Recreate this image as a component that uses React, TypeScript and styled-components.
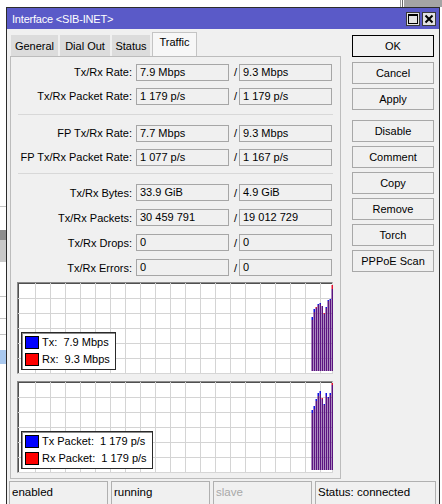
import React from 'react';
import styled, { createGlobalStyle } from 'styled-components';

const GlobalStyle = createGlobalStyle`
  html, body { margin: 0; padding: 0; }
  body {
    background: #fff;
    font-family: "Liberation Sans", Arial, sans-serif;
    font-size: 11px;
    color: #000;
  }
`;

// desktop and the windows lying behind the dialog
const Desktop = styled.div`
  position: relative;
  width: 442px;
  height: 504px;
  overflow: hidden;
  background: #fff;
`;

const Scrap = styled.div<{ $x: number; $y: number; $w: number; $h: number; $c: string }>`
  position: absolute;
  left: ${(p) => p.$x}px;
  top: ${(p) => p.$y}px;
  width: ${(p) => p.$w}px;
  height: ${(p) => p.$h}px;
  background: ${(p) => p.$c};
`;

const Dialog = styled.div`
  position: absolute;
  left: 6px;
  top: 7px;
  width: 434px;
  height: 497px;
  box-sizing: border-box;
  border: 1px solid #2c2c2c;
  border-bottom: none;
  background: #f0f0f0;
  display: flex;
  flex-direction: column;
`;

const TitleBar = styled.div`
  height: 21px;
  flex: none;
  background: #5a5ac8;
  color: #fff;
  display: flex;
  align-items: center;
  justify-content: space-between;
  padding: 0 3px 0 5px;
`;

const TitleText = styled.span`
  font-size: 11px;
  letter-spacing: -0.2px;
`;

const TitleButtons = styled.div`
  display: flex;
  gap: 2px;
`;

const TitleButton = styled.div`
  width: 14px;
  height: 14px;
  box-sizing: border-box;
  border: 1px solid #3a3a3a;
  background: #e2e2e2;
  display: flex;
  align-items: center;
  justify-content: center;
`;

const Main = styled.div`
  display: flex;
  padding: 3px 0 0 3px;
`;

const LeftCol = styled.div`
  width: 331px;
  display: flex;
  flex-direction: column;
`;

// tabs
const Tabs = styled.div`
  height: 24px;
  display: flex;
  align-items: flex-end;
  padding-left: 1px;
`;

const Tab = styled.div<{ $w: number; $active?: boolean }>`
  width: ${(p) => p.$w}px;
  height: ${(p) => (p.$active ? 24 : 21)}px;
  box-sizing: border-box;
  padding-top: ${(p) => (p.$active ? 3 : 4)}px;
  margin-right: 2px;
  text-align: center;
  white-space: nowrap;
  background: ${(p) => (p.$active ? '#f7f7f7' : '#dcdcdc')};
  border: 1px solid ${(p) => (p.$active ? '#c4c4c4' : '#dcdcdc')};
  border-bottom: none;
  font-size: 11px;
`;

const Panel = styled.div`
  height: 423px;
  box-sizing: border-box;
  border: 1px solid #bcbcbc;
  padding-top: 3px;
  display: flex;
  flex-direction: column;
`;

const Row = styled.div<{ $h?: number }>`
  display: flex;
  align-items: center;
  height: ${(p) => p.$h ?? 24}px;
`;

const Label = styled.div`
  width: 121px;
  margin-right: 4px;
  text-align: right;
  white-space: nowrap;
  font-size: 11px;
`;

const Field = styled.div`
  width: 93px;
  height: 17px;
  box-sizing: border-box;
  border: 1px solid #a6a6a6;
  background: #f0f0f0;
  padding-left: 3px;
  line-height: 15px;
  white-space: nowrap;
  font-size: 11px;
`;

const Slash = styled.div`
  width: 10px;
  box-sizing: border-box;
  padding-right: 2px;
  text-align: right;
  font-size: 11px;
`;

const Separator = styled.div<{ $mt: number; $mb: number }>`
  height: 1px;
  background: #d8d8d8;
  margin: ${(p) => p.$mt}px 7px ${(p) => p.$mb}px 7px;
`;

// graphs
const Graph = styled.div<{ $mt: number }>`
  position: relative;
  height: 92px;
  box-sizing: border-box;
  margin: ${(p) => p.$mt}px 7px 0 6px;
  border: 1px solid;
  border-color: #8a8a8a #d6d6d6 #d6d6d6 #8a8a8a;
  box-shadow: inset 1px 1px 0 #505050;
  background: #fff;
  svg {
    display: block;
  }
`;

const Legend = styled.div`
  position: absolute;
  left: 3px;
  bottom: 3px;
  height: 38px;
  box-sizing: border-box;
  border: 1px solid #2a2a2a;
  box-shadow: inset 1px 1px 0 #8a8a8a;
  background: #fff;
  padding: 2px 5px 0 3px;
  display: flex;
  flex-direction: column;
  gap: 3px;
`;

const LegendItem = styled.div`
  display: flex;
  align-items: center;
  height: 14px;
  white-space: pre;
  font-size: 11px;
`;

const Swatch = styled.span<{ $c: string }>`
  width: 14px;
  height: 13px;
  box-sizing: border-box;
  border: 1px solid #000;
  background: ${(p) => p.$c};
  margin-right: 3px;
`;

// buttons column
const RightCol = styled.div`
  width: 82px;
  margin: 3px 0 0 11px;
  display: flex;
  flex-direction: column;
`;

const Button = styled.div<{ $primary?: boolean; $sep?: boolean }>`
  height: 22px;
  box-sizing: border-box;
  border: 1px solid ${(p) => (p.$primary ? '#000' : '#a8a8a8')};
  background: #f0f0f0;
  display: flex;
  align-items: center;
  justify-content: center;
  font-size: 11px;
  margin-top: ${(p) => (p.$sep ? 6 : 0)}px;
  margin-bottom: ${(p) => (p.$primary ? 5 : 4)}px;
`;

// status bar
const StatusBar = styled.div`
  display: flex;
  gap: 3px;
  margin-top: 2px;
  padding-left: 2px;
  height: 23px;
`;

const StatusCell = styled.div<{ $w: number; $dim?: boolean }>`
  width: ${(p) => p.$w}px;
  box-sizing: border-box;
  border: 1px solid #b0b0b0;
  border-bottom: none;
  padding: 4px 0 0 2px;
  font-size: 11.5px;
  color: ${(p) => (p.$dim ? '#a8a8a8' : '#000')};
`;

type Sample = [number, number];

const trafficSamples: Sample[] = [
  [34, 37], [26, 29], [25, 24], [21, 22], [20, 21], [23, 23],
  [31, 30], [24, 25], [17, 18], [16, 17], [6, 2],
];

const packetSamples: Sample[] = [
  [28, 31], [24, 27], [17, 19], [11, 14], [9, 12], [17, 16],
  [22, 23], [11, 14], [15, 16], [11, 13], [3, 1],
];

const Chart: React.FC<{ samples: Sample[] }> = ({ samples }) => {
  const w = 315;
  const h = 90;
  const vLines = [];
  for (let x = 17; x < w; x += 15) vLines.push(x);
  const hLines = [];
  for (let y = 15; y < h; y += 15) hLines.push(y);
  const bottom = 88;
  return (
    <svg width={w} height={h}>
      <g shapeRendering="crispEdges">
        {vLines.map((x) => (
          <rect key={'v' + x} x={x} y={0} width={1} height={h} fill="#d4d4d4" />
        ))}
        {hLines.map((y) => (
          <rect key={'h' + y} x={0} y={y} width={w} height={1} fill="#d4d4d4" />
        ))}
      </g>
      {samples.map(([tx, rx], i) => {
        const x = 293.5 + i * 2;
        const low = Math.max(tx, rx);
        const high = Math.min(tx, rx);
        return (
          <g key={i}>
            <rect x={x} y={low} width={1.5} height={bottom - low} fill="#5a1480" />
            <rect
              x={x}
              y={high}
              width={1.5}
              height={low - high}
              fill={tx < rx ? '#1010e0' : '#e01030'}
            />
          </g>
        );
      })}
    </svg>
  );
};

const DataRow: React.FC<{ label: string; tx: string; rx: string; h?: number }> = ({ label, tx, rx, h }) => (
  <Row $h={h}>
    <Label>{label}</Label>
    <Field>{tx}</Field>
    <Slash>/</Slash>
    <Field>{rx}</Field>
  </Row>
);

const App: React.FC = () => {
  return (
    <>
      <GlobalStyle />
      <Desktop>
        <Scrap $x={0} $y={206} $w={6} $h={1} $c="#c4c4c4" />
        <Scrap $x={0} $y={230} $w={6} $h={10} $c="#8c8c8c" />
        <Scrap $x={0} $y={240} $w={6} $h={22} $c="#c8c8c8" />
        <Scrap $x={0} $y={296} $w={6} $h={1} $c="#c4c4c4" />
        <Scrap $x={0} $y={318} $w={6} $h={1} $c="#c4c4c4" />
        <Scrap $x={0} $y={334} $w={6} $h={1} $c="#c4c4c4" />
        <Scrap $x={0} $y={350} $w={6} $h={14} $c="#a9c8ee" />
        <Scrap $x={400} $y={0} $w={1} $h={7} $c="#9a9a9a" />
        <Scrap $x={402} $y={0} $w={1} $h={7} $c="#6a6a6a" />
        <Scrap $x={404} $y={0} $w={38} $h={7} $c="#a4a4a4" />

        <Dialog>
          <TitleBar>
            <TitleText>Interface &lt;SIB-INET&gt;</TitleText>
            <TitleButtons>
              <TitleButton>
                <svg width="10" height="10" viewBox="0 0 10 10" shapeRendering="crispEdges">
                  <rect x="0.5" y="0.5" width="9" height="9" fill="none" stroke="#000" />
                  <rect x="0" y="0" width="10" height="2" fill="#000" />
                </svg>
              </TitleButton>
              <TitleButton>
                <svg width="10" height="10" viewBox="0 0 10 10">
                  <path d="M1.5 1.5 L8.5 8.5 M8.5 1.5 L1.5 8.5" stroke="#000" strokeWidth="2" />
                </svg>
              </TitleButton>
            </TitleButtons>
          </TitleBar>

          <Main>
            <LeftCol>
              <Tabs>
                <Tab $w={47}>General</Tab>
                <Tab $w={50}>Dial Out</Tab>
                <Tab $w={38}>Status</Tab>
                <Tab $w={45} $active>Traffic</Tab>
              </Tabs>
              <Panel>
                <DataRow label="Tx/Rx Rate:" tx="7.9 Mbps" rx="9.3 Mbps" />
                <DataRow label="Tx/Rx Packet Rate:" tx="1 179 p/s" rx="1 179 p/s" />
                <Separator $mt={6} $mb={6} />
                <DataRow label="FP Tx/Rx Rate:" tx="7.7 Mbps" rx="9.3 Mbps" />
                <DataRow label="FP Tx/Rx Packet Rate:" tx="1 077 p/s" rx="1 167 p/s" />
                <Separator $mt={4} $mb={6} />
                <DataRow label="Tx/Rx Bytes:" tx="33.9 GiB" rx="4.9 GiB" h={25} />
                <DataRow label="Tx/Rx Packets:" tx="30 459 791" rx="19 012 729" h={25} />
                <DataRow label="Tx/Rx Drops:" tx="0" rx="0" h={25} />
                <DataRow label="Tx/Rx Errors:" tx="0" rx="0" h={25} />

                <Graph $mt={2}>
                  <Chart samples={trafficSamples} />
                  <Legend>
                    <LegendItem>
                      <Swatch $c="#0000ff" />
                      {'Tx:  7.9 Mbps'}
                    </LegendItem>
                    <LegendItem>
                      <Swatch $c="#ff0000" />
                      {'Rx:  9.3 Mbps'}
                    </LegendItem>
                  </Legend>
                </Graph>

                <Graph $mt={7}>
                  <Chart samples={packetSamples} />
                  <Legend>
                    <LegendItem>
                      <Swatch $c="#0000ff" />
                      {'Tx Packet:  1 179 p/s'}
                    </LegendItem>
                    <LegendItem>
                      <Swatch $c="#ff0000" />
                      {'Rx Packet:  1 179 p/s'}
                    </LegendItem>
                  </Legend>
                </Graph>
              </Panel>
            </LeftCol>

            <RightCol>
              <Button $primary>OK</Button>
              <Button>Cancel</Button>
              <Button>Apply</Button>
              <Button $sep>Disable</Button>
              <Button>Comment</Button>
              <Button>Copy</Button>
              <Button>Remove</Button>
              <Button>Torch</Button>
              <Button>PPPoE Scan</Button>
            </RightCol>
          </Main>

          <StatusBar>
            <StatusCell $w={99}>enabled</StatusCell>
            <StatusCell $w={99}>running</StatusCell>
            <StatusCell $w={99} $dim>slave</StatusCell>
            <StatusCell $w={121}>Status: connected</StatusCell>
          </StatusBar>
        </Dialog>
      </Desktop>
    </>
  );
};

export default App;
